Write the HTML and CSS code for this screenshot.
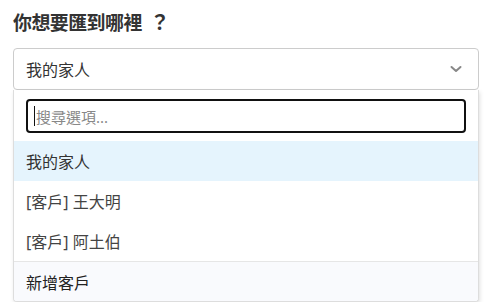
FILE: index.html
```html
<!DOCTYPE html>
<html lang="zh-Hant">
<head>
<meta charset="utf-8">
<link rel="stylesheet" href="styles.css">
</head>
<body>
<div class="field">
  <h2 class="label">你想要匯到哪裡<span class="q">？</span></h2>
  <div class="select">
    <span class="value">我的家人</span>
    <svg class="chev" width="12" height="8" viewBox="0 0 12 8"><path d="M1.5 2 L6 6 L10.5 2" fill="none" stroke="#888" stroke-width="2" stroke-linecap="round" stroke-linejoin="round"/></svg>
  </div>
  <div class="menu">
    <div class="search-wrap">
      <div class="search"><span class="caret"></span><span class="ph">搜尋選項...</span></div>
    </div>
    <div class="opt active">我的家人</div>
    <div class="opt">[客戶] 王大明</div>
    <div class="opt">[客戶] 阿土伯</div>
    <div class="opt footer">新增客戶</div>
  </div>
</div>
</body>
</html>
```
FILE: styles.css
```css
* { box-sizing: border-box; }
html, body { margin: 0; background: #fff; }
body {
  font-family: "Noto Sans", "Noto Sans CJK TC", sans-serif;
  padding: 0 14px 0 13px;
  color: #333;
}
.label {
  margin: 10px 0 12px 0;
  font-size: 19px;
  line-height: 26px;
  letter-spacing: -0.6px;
  font-weight: 700;
  color: #333;
}
.q { display: inline-block; margin-left: 8px; font-size: 20px; }
.select {
  height: 42px;
  border: 1px solid #ccc;
  border-radius: 4px;
  display: flex;
  align-items: center;
  justify-content: space-between;
  padding: 0 16px 0 12px;
  font-size: 16px;
  color: #333;
}
.chev { display: block; }
.menu {
  border: 1px solid #ddd;
  border-top: none;
  border-radius: 0 0 4px 4px;
  box-shadow: 1px 2px 4px rgba(0,0,0,0.12);
  background: #fff;
  overflow: hidden;
}
.search-wrap { padding: 9px 12px 8px; }
.search {
  height: 34px;
  border: 2px solid #111;
  border-radius: 4px;
  display: flex;
  align-items: center;
  padding-left: 6px;
  font-size: 15px;
}
.caret { width: 1px; height: 20px; background: #111; margin-right: 1px; }
.ph { color: #888; }
.opt {
  height: 40px;
  display: flex;
  align-items: center;
  padding-left: 12px;
  font-size: 16px;
  color: #444;
}
.opt.active { background: #e5f4fd; color: #333; }
.opt.footer {
  border-top: 1px solid #e6e6e6;
  background: #f9fafd;
  color: #222;
}
```
